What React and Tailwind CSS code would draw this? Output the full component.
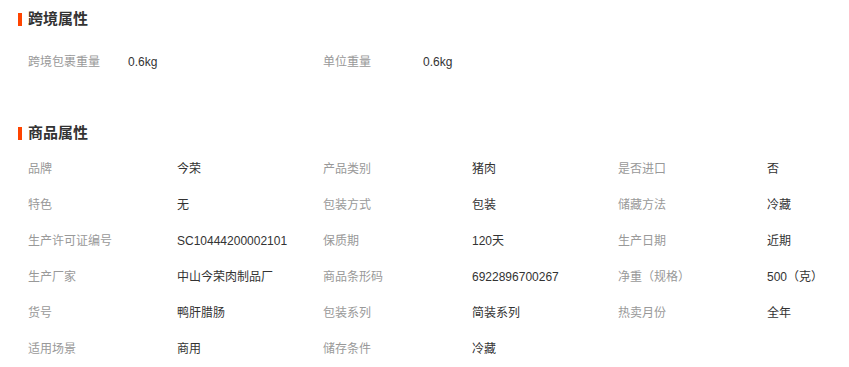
const crossBorder = [
  ["跨境包裹重量", "0.6kg"],
  ["单位重量", "0.6kg"],
];

const goods = [
  ["品牌", "今荣"],
  ["产品类别", "猪肉"],
  ["是否进口", "否"],
  ["特色", "无"],
  ["包装方式", "包装"],
  ["储藏方法", "冷藏"],
  ["生产许可证编号", "SC10444200002101"],
  ["保质期", "120天"],
  ["生产日期", "近期"],
  ["生产厂家", "中山今荣肉制品厂"],
  ["商品条形码", "6922896700267"],
  ["净重（规格）", "500（克）"],
  ["货号", "鸭肝腊肠"],
  ["包装系列", "简装系列"],
  ["热卖月份", "全年"],
  ["适用场景", "商用"],
  ["储存条件", "冷藏"],
];

const Heading = ({ children }) => (
  <div className="flex items-center h-5 pl-[18px]">
    <span className="w-1 h-[13px] bg-[#ff4400]" />
    <span className="ml-1.5 text-[15px] font-bold text-[#333]">{children}</span>
  </div>
);

const Attr = ({ label, value, labelW }) => (
  <div className="flex items-center h-9 w-[295px]">
    <span className={`${labelW} text-[#999] shrink-0`}>{label}</span>
    <span className="text-[#333]">{value}</span>
  </div>
);

export default function App() {
  return (
    <div
      className="w-[849px] h-[367px] bg-white text-xs overflow-hidden"
      style={{ fontFamily: '"Liberation Sans", "Noto Sans CJK SC", sans-serif' }}
    >
      <div className="pt-[9px]">
        <Heading>跨境属性</Heading>
      </div>
      <div className="flex pl-7 mt-[15px]">
        {crossBorder.map(([l, v]) => (
          <Attr key={l} label={l} value={v} labelW="w-[100px]" />
        ))}
      </div>
      <div className="mt-[43px]">
        <Heading>商品属性</Heading>
      </div>
      <div className="grid grid-cols-[295px_295px_295px] pl-7 mt-2">
        {goods.map(([l, v]) => (
          <Attr key={l} label={l} value={v} labelW="w-[149px]" />
        ))}
      </div>
    </div>
  );
}
